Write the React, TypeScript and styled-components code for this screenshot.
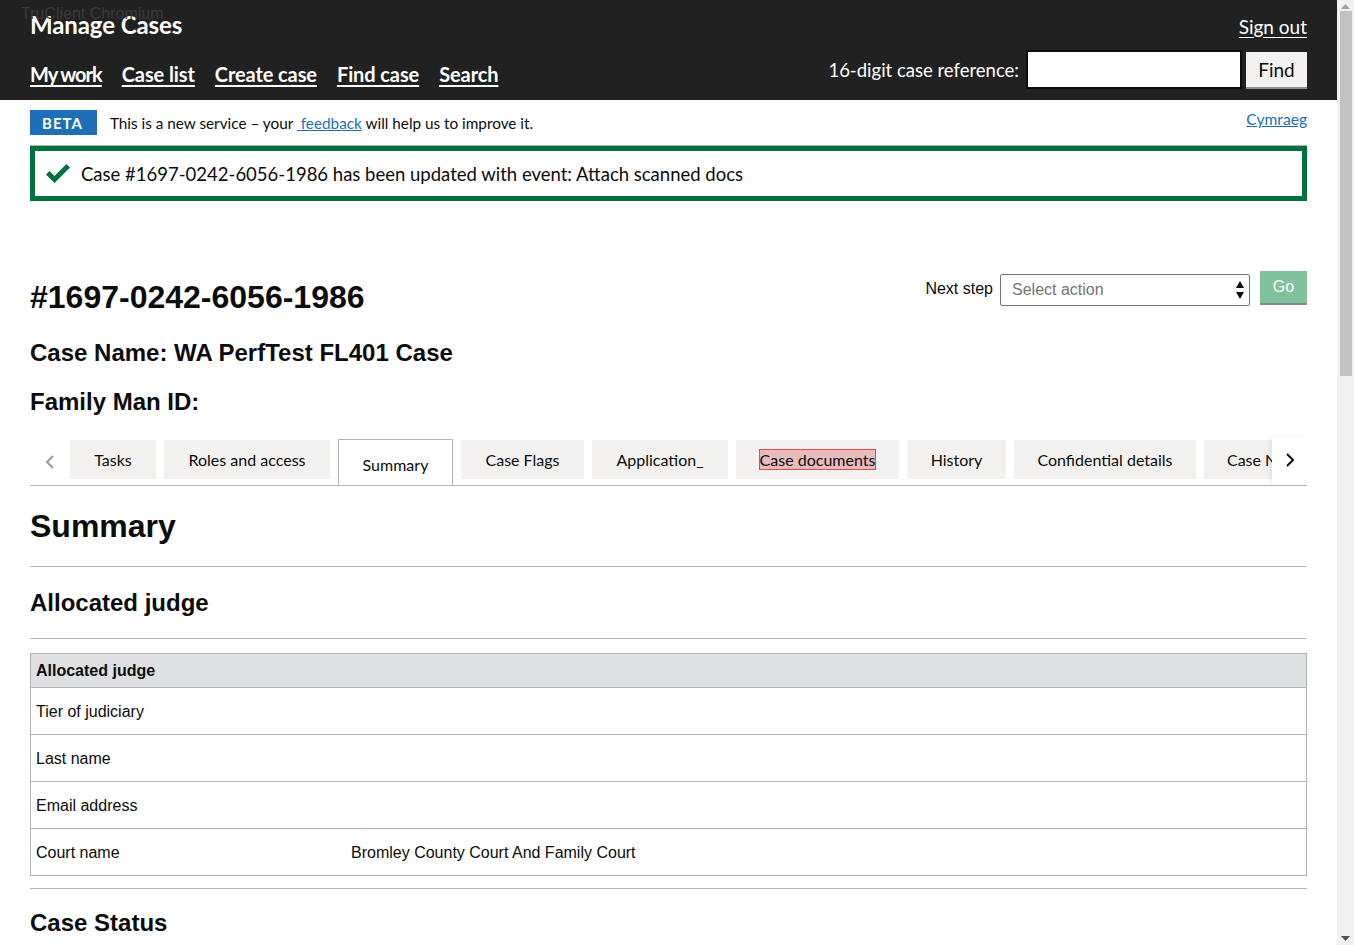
import React from 'react';
import styled, { createGlobalStyle } from 'styled-components';

const GlobalStyle = createGlobalStyle`
  html, body {
    margin: 0;
    padding: 0;
    background: #ffffff;
    color: #0b0c0c;
    font-family: 'Liberation Sans', Arial, sans-serif;
  }
`;

const gds = `'Lato', 'Liberation Sans', Arial, sans-serif`;

const Page = styled.div`
  padding-right: 17px;
`;

const Scrollbar = styled.div`
  position: fixed;
  top: 0;
  right: 0;
  width: 17px;
  height: 100vh;
  background: #f1f1f1;
  display: flex;
  flex-direction: column;
  align-items: center;
  justify-content: space-between;
  padding: 4px 0;
  box-sizing: border-box;
  z-index: 5;
`;

const Thumb = styled.div`
  width: 12px;
  height: 365px;
  background: #c1c1c1;
  margin-top: 2px;
`;

const ScrollSpacer = styled.div`
  flex: 1;
`;

const Header = styled.header`
  position: relative;
  background: #212121;
  color: #ffffff;
  height: 100px;
  padding: 0 30px;
  box-sizing: border-box;
  font-family: ${gds};
`;

const Watermark = styled.div`
  position: absolute;
  left: 21px;
  top: 5px;
  font-family: 'Liberation Sans', Arial, sans-serif;
  font-size: 16px;
  color: #3a3a3a;
`;

const TopRow = styled.div`
  display: flex;
  justify-content: space-between;
  align-items: center;
  padding-top: 10px;
`;

const BottomRow = styled.div`
  display: flex;
  justify-content: space-between;
  align-items: flex-end;
  margin-top: 11px;
`;

const Title = styled.div`
  font-size: 24px;
  font-weight: 700;
  letter-spacing: -0.1px;
`;

const SignOut = styled.a`
  color: #ffffff;
  font-size: 19px;
  text-decoration: underline;
  text-underline-offset: 3px;
  margin-top: 3px;
`;

const Nav = styled.nav`
  display: flex;
  gap: 20px;
  padding-bottom: 3px;
`;

const NavLink = styled.a<{ $tight?: boolean }>`
  color: #ffffff;
  font-size: 20px;
  font-weight: 700;
  text-decoration: underline;
  text-underline-offset: 3px;
  letter-spacing: ${(p) => (p.$tight ? '-1px' : '-0.1px')};
`;

const SearchForm = styled.div`
  display: flex;
  align-items: center;
`;

const SearchLabel = styled.label`
  font-size: 18.5px;
  margin-right: 7px;
`;

const SearchInput = styled.div`
  width: 212px;
  height: 35px;
  border: 2px solid #0b0c0c;
  background: #ffffff;
  margin-right: 4px;
`;

const FindButton = styled.button`
  align-self: flex-end;
  font-family: ${gds};
  font-size: 19px;
  color: #0b0c0c;
  background: #f3f2f1;
  border: none;
  box-shadow: 0 2px 0 #929191;
  height: 35px;
  width: 61px;
  margin-bottom: 2px;
  padding: 0;
`;

const Main = styled.main`
  padding: 0 30px 40px;
`;

const PhaseBanner = styled.div`
  display: flex;
  align-items: center;
  justify-content: space-between;
  height: 46px;
  box-sizing: border-box;
  border-bottom: 1px solid #b1b4b6;
  font-family: ${gds};
`;

const PhaseLeft = styled.div`
  display: flex;
  align-items: center;
  font-size: 15.3px;
`;

const Tag = styled.strong`
  background: #1d70b8;
  color: #ffffff;
  font-size: 15px;
  font-weight: 700;
  letter-spacing: 1px;
  padding: 4px 14px 3px 12px;
  margin-right: 13px;
`;

const BlueLink = styled.a`
  color: #1d70b8;
  text-decoration: underline;
`;

const Cymraeg = styled(BlueLink)`
  font-size: 15.6px;
  align-self: flex-start;
  margin-top: 10px;
`;

const Alert = styled.div`
  display: flex;
  align-items: center;
  gap: 10px;
  border: 5px solid #00703c;
  height: 55px;
  box-sizing: border-box;
  padding: 0 10px;
  font-family: ${gds};
  font-size: 18.5px;
`;

const CaseHeader = styled.div`
  display: flex;
  justify-content: space-between;
  align-items: flex-start;
  margin-top: 70px;
`;

const CaseNumber = styled.h1`
  font-size: 32px;
  font-weight: 700;
  margin: 9px 0 0;
  line-height: 1.1;
`;

const NextStep = styled.div`
  display: flex;
  align-items: flex-start;
  font-size: 16px;
`;

const NextLabel = styled.span`
  margin: 9px 7px 0 0;
`;

const SelectBox = styled.div`
  display: flex;
  align-items: center;
  justify-content: space-between;
  width: 250px;
  height: 32px;
  margin-top: 3px;
  box-sizing: border-box;
  border: 1px solid #767676;
  border-radius: 2px;
  padding: 0 5px 0 11px;
  color: #757575;
  font-size: 16px;
`;

const GoButton = styled.button`
  font-family: 'Liberation Sans', Arial, sans-serif;
  font-size: 16px;
  color: #ffffff;
  background: #80c29c;
  border: none;
  box-shadow: 0 2px 0 #7e8f85;
  width: 47px;
  height: 32px;
  margin-left: 10px;
  padding: 0 0 1px;
`;

const SubHeading = styled.h2<{ $top: number }>`
  font-size: 24px;
  font-weight: 700;
  margin: ${(p) => p.$top}px 0 0;
  line-height: 1.2;
`;

const TabsBar = styled.div`
  display: flex;
  align-items: flex-end;
  margin-top: 20px;
  border-bottom: 1px solid #b1b4b6;
  height: 48px;
  font-family: ${gds};
`;

const ArrowButton = styled.div<{ $right?: boolean }>`
  display: flex;
  align-items: center;
  justify-content: center;
  width: ${(p) => (p.$right ? 35 : 40)}px;
  height: ${(p) => (p.$right ? 47 : 40)}px;
  align-self: ${(p) => (p.$right ? 'flex-start' : 'center')};
  margin-top: ${(p) => (p.$right ? 0 : 2)}px;
  background: #ffffff;
  box-shadow: ${(p) => (p.$right ? '-3px 0 4px rgba(0,0,0,0.06)' : 'none')};
  flex-shrink: 0;
  z-index: 1;
`;

const TabsTrack = styled.div`
  display: flex;
  gap: 8px;
  flex: 1;
  overflow: hidden;
  align-items: flex-end;
  height: 49px;
`;

const Tab = styled.div<{ $active?: boolean; $w: number }>`
  flex-shrink: 0;
  width: ${(p) => p.$w}px;
  box-sizing: border-box;
  display: flex;
  align-items: center;
  justify-content: center;
  font-size: 16px;
  color: #0b0c0c;
  white-space: nowrap;
  background: ${(p) => (p.$active ? '#ffffff' : '#f3f2f1')};
  border: ${(p) => (p.$active ? '1px solid #b1b4b6' : 'none')};
  border-bottom: none;
  height: ${(p) => (p.$active ? 47 : 39)}px;
  margin-bottom: ${(p) => (p.$active ? -1 : 6)}px;
  padding-top: ${(p) => (p.$active ? 3 : 0)}px;
  overflow: hidden;
`;

const Highlight = styled.span`
  background: #e8bcbc;
  outline: 1px solid #ec4a4a;
`;

const PageTitle = styled.h2`
  font-size: 32px;
  font-weight: 700;
  margin: 21px 0 0;
  line-height: 1.2;
`;

const Rule = styled.hr<{ $top: number }>`
  border: none;
  border-top: 1px solid #b1b4b6;
  margin: ${(p) => p.$top}px 0 0;
`;

const Table = styled.div`
  margin-top: 14px;
  border: 1px solid #b1b4b6;
  font-size: 16px;
`;

const TableHead = styled.div`
  background: #dee0e2;
  font-weight: 700;
  height: 33px;
  box-sizing: border-box;
  display: flex;
  align-items: center;
  padding: 2px 5px 0;
`;

const Row = styled.div`
  display: grid;
  grid-template-columns: 315px 1fr;
  align-items: center;
  height: 47px;
  border-top: 1px solid #b1b4b6;
  box-sizing: border-box;
  padding: 3px 5px 0;
`;

const Check = () => (
  <svg width="26" height="22" viewBox="0 0 26 22">
    <path d="M1 11.5 L4.5 8 L9.5 13 L21.5 1 L25 4.5 L9.5 20 Z" fill="#00703c" />
  </svg>
);

const Chevron = ({ left }: { left?: boolean }) => (
  <svg width="10" height="16" viewBox="0 0 10 16">
    <path
      d={left ? 'M8 2 L2 8 L8 14' : 'M2 2 L8 8 L2 14'}
      fill="none"
      stroke={left ? '#9a9a9a' : '#0b0c0c'}
      strokeWidth="2"
    />
  </svg>
);

const SortArrows = () => (
  <svg width="8" height="20" viewBox="0 0 8 20">
    <path d="M0 8 L4 1 L8 8 Z M0 12 L4 19 L8 12 Z" fill="#0b0c0c" />
  </svg>
);

const ScrollArrow = ({ down }: { down?: boolean }) => (
  <svg width="9" height="5" viewBox="0 0 9 5">
    <path d={down ? 'M0 0 L9 0 L4.5 5 Z' : 'M0 5 L9 5 L4.5 0 Z'} fill={down ? '#505050' : '#a3a3a3'} />
  </svg>
);

const navItems = ['My work', 'Case list', 'Create case', 'Find case', 'Search'];

const tabs = [
  { label: 'Tasks', w: 86 },
  { label: 'Roles and access', w: 166 },
  { label: 'Summary', w: 115, active: true },
  { label: 'Case Flags', w: 123 },
  { label: 'Application_', w: 136 },
  { label: 'Case documents', w: 163, marked: true },
  { label: 'History', w: 99 },
  { label: 'Confidential details', w: 182 },
  { label: 'Case Notes', w: 126 },
];

const judgeRows = [
  { label: 'Tier of judiciary', value: '' },
  { label: 'Last name', value: '' },
  { label: 'Email address', value: '' },
  { label: 'Court name', value: 'Bromley County Court And Family Court' },
];

export default function App() {
  return (
    <Page>
      <GlobalStyle />
      <Header>
        <Watermark>TruClient Chromium</Watermark>
        <TopRow>
          <Title>Manage Cases</Title>
          <SignOut href="#">Sign out</SignOut>
        </TopRow>
        <BottomRow>
          <Nav>
            {navItems.map((item) => (
              <NavLink key={item} href="#" $tight={item === 'My work'}>
                {item}
              </NavLink>
            ))}
          </Nav>
          <SearchForm>
            <SearchLabel>16-digit case reference:</SearchLabel>
            <SearchInput />
            <FindButton>Find</FindButton>
          </SearchForm>
        </BottomRow>
      </Header>

      <Main>
        <PhaseBanner>
          <PhaseLeft>
            <Tag>BETA</Tag>
            <span>
              This is a new service – your <BlueLink href="#">&nbsp;feedback</BlueLink> will help us to improve it.
            </span>
          </PhaseLeft>
          <Cymraeg href="#">Cymraeg</Cymraeg>
        </PhaseBanner>

        <Alert>
          <Check />
          <span>Case #1697-0242-6056-1986 has been updated with event: Attach scanned docs</span>
        </Alert>

        <CaseHeader>
          <CaseNumber>#1697-0242-6056-1986</CaseNumber>
          <NextStep>
            <NextLabel>Next step</NextLabel>
            <SelectBox>
              <span>Select action</span>
              <SortArrows />
            </SelectBox>
            <GoButton>Go</GoButton>
          </NextStep>
        </CaseHeader>
        <SubHeading $top={24}>Case Name: WA PerfTest FL401 Case</SubHeading>
        <SubHeading $top={20}>Family Man ID:</SubHeading>

        <TabsBar>
          <ArrowButton>
            <Chevron left />
          </ArrowButton>
          <TabsTrack>
            {tabs.map((t) => (
              <Tab key={t.label} $w={t.w} $active={t.active}>
                {t.marked ? <Highlight>{t.label}</Highlight> : t.label}
              </Tab>
            ))}
          </TabsTrack>
          <ArrowButton $right>
            <Chevron />
          </ArrowButton>
        </TabsBar>

        <PageTitle>Summary</PageTitle>
        <Rule $top={21} />
        <SubHeading $top={22}>Allocated judge</SubHeading>
        <Rule $top={20} />
        <Table>
          <TableHead>Allocated judge</TableHead>
          {judgeRows.map((r) => (
            <Row key={r.label}>
              <span>{r.label}</span>
              <span>{r.value}</span>
            </Row>
          ))}
        </Table>
        <Rule $top={12} />
        <SubHeading $top={20}>Case Status</SubHeading>
        <Table>
          <TableHead>Case Status</TableHead>
          <Row>
            <span>State</span>
            <span>Submitted</span>
          </Row>
        </Table>
      </Main>

      <Scrollbar>
        <ScrollArrow />
        <Thumb />
        <ScrollSpacer />
        <ScrollArrow down />
      </Scrollbar>
    </Page>
  );
}
